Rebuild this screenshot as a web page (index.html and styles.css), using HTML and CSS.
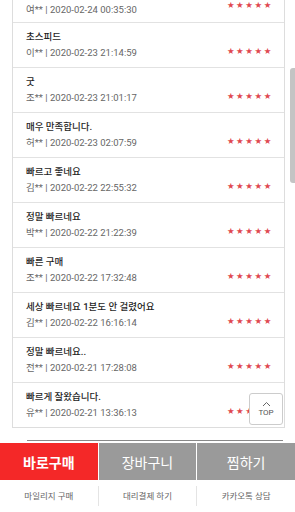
FILE: index.html
```html
<!DOCTYPE html>
<html lang="ko">
<head>
  <meta charset="UTF-8" />
  <meta name="viewport" content="width=device-width, initial-scale=1.0"/>
  <title>상품후기</title>
  <link rel="stylesheet" href="styles.css">
</head>
<body>

  <div class="page">
    <div class="review-box">
      <div class="review partial">
        <div class="review-info">
          <div class="review-meta">여** | 2020-02-24 00:35:30</div>
        </div>
        <div class="stars">★★★★★</div>
      </div>
      <div class="review">
        <div class="review-info">
          <div class="review-title">초스피드</div>
          <div class="review-meta">이** | 2020-02-23 21:14:59</div>
        </div>
        <div class="stars">★★★★★</div>
      </div>
      <div class="review">
        <div class="review-info">
          <div class="review-title">굿</div>
          <div class="review-meta">조** | 2020-02-23 21:01:17</div>
        </div>
        <div class="stars">★★★★★</div>
      </div>
      <div class="review">
        <div class="review-info">
          <div class="review-title">매우 만족합니다.</div>
          <div class="review-meta">허** | 2020-02-23 02:07:59</div>
        </div>
        <div class="stars">★★★★★</div>
      </div>
      <div class="review">
        <div class="review-info">
          <div class="review-title">빠르고 좋네요</div>
          <div class="review-meta">김** | 2020-02-22 22:55:32</div>
        </div>
        <div class="stars">★★★★★</div>
      </div>
      <div class="review">
        <div class="review-info">
          <div class="review-title">정말 빠르네요</div>
          <div class="review-meta">박** | 2020-02-22 21:22:39</div>
        </div>
        <div class="stars">★★★★★</div>
      </div>
      <div class="review">
        <div class="review-info">
          <div class="review-title">빠른 구매</div>
          <div class="review-meta">조** | 2020-02-22 17:32:48</div>
        </div>
        <div class="stars">★★★★★</div>
      </div>
      <div class="review">
        <div class="review-info">
          <div class="review-title">세상 빠르네요 1분도 안 걸렸어요</div>
          <div class="review-meta">김** | 2020-02-22 16:16:14</div>
        </div>
        <div class="stars">★★★★★</div>
      </div>
      <div class="review">
        <div class="review-info">
          <div class="review-title">정말 빠르네요..</div>
          <div class="review-meta">전** | 2020-02-21 17:28:08</div>
        </div>
        <div class="stars">★★★★★</div>
      </div>
      <div class="review">
        <div class="review-info">
          <div class="review-title">빠르게 잘왔습니다.</div>
          <div class="review-meta">유** | 2020-02-21 13:36:13</div>
        </div>
        <div class="stars">★★★★★</div>
      </div>
    </div>
    <div class="divider"></div>

    <a class="top-btn" href="#">
      <svg width="9" height="6" viewBox="0 0 9 6"><path d="M1 5 L4.5 1.5 L8 5" fill="none" stroke="#666" stroke-width="1"/></svg>
      <span>TOP</span>
    </a>
    <div class="scroll-thumb"></div>
  </div>

  <div class="buy-bar">
    <button class="btn-buy">바로구매</button>
    <button class="btn-grey">장바구니</button>
    <button class="btn-grey">찜하기</button>
  </div>

  <div class="links">
    <a href="#">마일리지 구매</a>
    <a href="#">대리결제 하기</a>
    <a href="#">카카오톡 상담</a>
  </div>

</body>
</html>
```

FILE: styles.css
```css
* {
  box-sizing: border-box;
  font-family: Roboto, 'Noto Sans CJK KR', sans-serif;
}

body {
  margin: 0;
  width: 295px;
  height: 512px;
  overflow: hidden;
  background: #fff;
  color: #222;
}

.page {
  position: relative;
  height: 443px;
  overflow: hidden;
  padding: 0 10px 0 12px;
}

.review-box {
  border: 1px solid #ddd;
  border-top: none;
}

.review {
  display: flex;
  align-items: center;
  justify-content: space-between;
  height: 45px;
  padding: 0 13px 0 13px;
  border-top: 1px solid #e2e2e2;
}

.review.partial {
  height: 22px;
  align-items: flex-start;
  border-top: none;
}

.review.partial .review-meta {
  margin-top: 3px;
}

.review.partial .stars {
  margin-top: 0;
}

.review-title {
  font-size: 9.5px;
  font-weight: 500;
  color: #1e1e1e;
  line-height: 14px;
  margin-bottom: 2px;
}

.review-meta {
  font-size: 9.5px;
  color: #666;
  line-height: 14px;
}

.stars {
  font-family: 'DejaVu Sans', sans-serif;
  font-size: 8.5px;
  line-height: 10px;
  letter-spacing: 1.6px;
  color: #e0474f;
  margin-top: 12px;
  margin-right: -2px;
}

.divider {
  margin: 12px 2px 0 15px;
  border-top: 1px solid #888;
}

.top-btn {
  position: absolute;
  left: 249px;
  top: 393px;
  width: 34px;
  height: 32px;
  background: #fff;
  border: 1px solid #ccc;
  border-radius: 3px;
  display: flex;
  flex-direction: column;
  align-items: center;
  justify-content: center;
  text-decoration: none;
  color: #555;
  font-size: 8px;
  line-height: 10px;
}

.top-btn svg {
  margin-bottom: 1px;
}

.scroll-thumb {
  position: absolute;
  left: 290px;
  top: 68px;
  width: 5px;
  height: 115px;
  background: #c4c4c4;
  border-radius: 3px 0 0 3px;
}

.buy-bar {
  display: flex;
  height: 37px;
}

.buy-bar button {
  flex: 1;
  border: none;
  color: #fff;
  font-size: 14px;
  padding: 0;
}

.btn-buy {
  background: #f42828;
  font-weight: bold;
}

.btn-grey {
  background: #9a9a9a;
  border-left: 1px solid #fff !important;
}

.links {
  display: flex;
  height: 32px;
  align-items: center;
}

.links a {
  flex: 1;
  text-align: center;
  font-size: 8.5px;
  color: #666;
  text-decoration: none;
  line-height: 20px;
  border-left: 1px solid #e4e4e4;
}

.links a:first-child {
  border-left: none;
}
```
